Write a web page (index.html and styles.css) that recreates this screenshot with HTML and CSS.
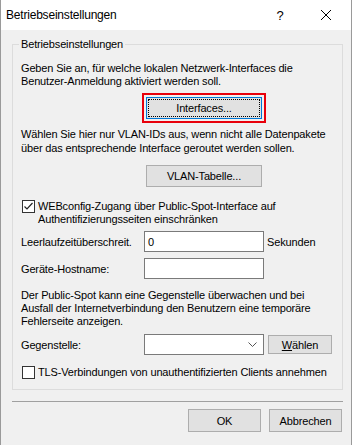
FILE: index.html
```html
<!DOCTYPE html>
<html lang="de">
<head>
<meta charset="utf-8">
<title>Betriebseinstellungen</title>
<link rel="stylesheet" href="styles.css">
</head>
<body>
<div class="window">
  <div class="titlebar">
    <span class="title">Betriebseinstellungen</span>
    <span class="help">?</span>
    <svg class="close" width="12" height="12" viewBox="0 0 12 12"><path d="M1 1 L11 11 M11 1 L1 11" stroke="#000" stroke-width="1" fill="none"/></svg>
  </div>
  <div class="content">
    <fieldset class="group">
      <legend class="caption">Betriebseinstellungen</legend>
      <p class="text t1">Geben Sie an, für welche lokalen Netzwerk-Interfaces die<br>Benutzer-Anmeldung aktiviert werden soll.</p>
      <div class="btn-wrap b1"><div class="btn focused"><span class="focusrect">Interfaces...</span></div></div>
      <p class="text t2">Wählen Sie hier nur VLAN-IDs aus, wenn nicht alle Datenpakete<br>über das entsprechende Interface geroutet werden sollen.</p>
      <div class="btn-wrap b2"><div class="btn">VLAN-Tabelle...</div></div>
      <div class="check-row c1">
        <span class="checkbox"><svg width="11" height="11" viewBox="0 0 11 11"><path d="M1.5 5.5 L4 8 L9.5 2" stroke="#222" stroke-width="1.2" fill="none"/></svg></span>
        <span class="check-label">WEBconfig-Zugang über Public-Spot-Interface auf<br>Authentifizierungsseiten einschränken</span>
      </div>
      <div class="field-row r1">
        <span class="label">Leerlaufzeitüberschreit.</span>
        <span class="input">0</span>
        <span class="unit">Sekunden</span>
      </div>
      <div class="field-row r2">
        <span class="label">Geräte-Hostname:</span>
        <span class="input"></span>
      </div>
      <p class="text t3">Der Public-Spot kann eine Gegenstelle überwachen und bei<br>Ausfall der Internetverbindung den Benutzern eine temporäre<br>Fehlerseite anzeigen.</p>
      <div class="field-row r3">
        <span class="label">Gegenstelle:</span>
        <span class="input combo"><svg width="9" height="6" viewBox="0 0 9 6"><path d="M0.5 0.5 L4.5 4.5 L8.5 0.5" stroke="#555" stroke-width="1" fill="none"/></svg></span>
        <span class="btn small"><u>W</u>ählen</span>
      </div>
      <div class="check-row c2">
        <span class="checkbox"></span>
        <span class="check-label">TLS-Verbindungen von unauthentifizierten Clients annehmen</span>
      </div>
    </fieldset>
    <div class="separator"></div>
    <div class="footer">
      <span class="btn dlg">OK</span>
      <span class="btn dlg">Abbrechen</span>
    </div>
  </div>
</div>
</body>
</html>
```

FILE: styles.css
```css
* { box-sizing: border-box; }
html, body { margin: 0; padding: 0; }
body {
  width: 352px;
  height: 445px;
  overflow: hidden;
  font-family: "Liberation Sans", Arial, sans-serif;
  font-size: 11px;
  letter-spacing: -0.15px;
  color: #000;
  background: #f0f0f0;
  white-space: nowrap;
}
.window {
  width: 352px;
  height: 445px;
  border-left: 1px solid #9a9a9a;
  border-right: 1px solid #9a9a9a;
  background: #f0f0f0;
}
.titlebar {
  height: 30px;
  background: #fff;
  display: flex;
  align-items: center;
}
.title {
  font-size: 12px;
  letter-spacing: -0.2px;
  padding-left: 5px;
  flex: 1;
}
.help {
  font-size: 13px;
  width: 12px;
  margin-right: 34px;
  text-align: center;
}
.close {
  margin-right: 19px;
}
.content {
  padding: 0 8px 0 11px;
}
.group {
  margin: 7px 0 0 0;
  padding: 11px 8px 10px 8px;
  border: 1px solid #dcdcdc;
  width: 331px;
  min-width: 0;
}
.caption {
  padding: 0 2px;
  margin-left: -2px;
  line-height: 14px;
}
.text {
  margin: 0;
  line-height: 13px;
}
.t2 { margin-top: 8px; line-height: 14px; }
.t3 { margin-top: 10px; }
.btn-wrap { margin-left: 125px; width: 116px; }
.b1 { margin-top: 9px; }
.b2 { margin-top: 10px; }
.btn {
  background: #e1e1e1;
  border: 1px solid #adadad;
  display: flex;
  align-items: center;
  justify-content: center;
  height: 22px;
}
.btn.focused {
  border-color: #0078d7;
  outline: 2px solid #e8000b;
  outline-offset: 2px;
  padding: 1px;
}
.focusrect {
  display: flex;
  align-items: center;
  justify-content: center;
  width: 100%;
  height: 100%;
  border: 1px dotted #000;
}
.check-row {
  display: flex;
  align-items: flex-start;
  line-height: 13px;
}
.c1 { margin-top: 13px; }
.c2 { margin-top: 11px; }
.checkbox {
  width: 13px;
  height: 13px;
  border: 1px solid #333;
  background: #fff;
  margin-left: 1px;
  margin-right: 3px;
  flex: none;
  display: flex;
  align-items: center;
  justify-content: center;
}
.field-row {
  display: flex;
  align-items: center;
  height: 21px;
}
.r1 { margin-top: 5px; }
.r2 { margin-top: 6px; }
.r3 { margin-top: 6px; }
.label { width: 123px; flex: none; }
.input {
  width: 120px;
  height: 21px;
  background: #fff;
  border: 1px solid #7a7a7a;
  flex: none;
  padding-left: 3px;
  display: flex;
  align-items: center;
}
.unit { margin-left: 3px; }
.combo {
  justify-content: flex-end;
  padding-right: 6px;
}
.btn.small {
  width: 64px;
  height: 19px;
  margin-left: 4px;
}
.separator {
  margin-top: 11px;
  height: 1px;
  width: 331px;
  background: #a0a0a0;
}
.footer {
  margin-top: 7px;
  display: flex;
  justify-content: flex-end;
  gap: 8px;
  padding-right: 1px;
}
.btn.dlg {
  width: 73px;
  height: 23px;
}
```
